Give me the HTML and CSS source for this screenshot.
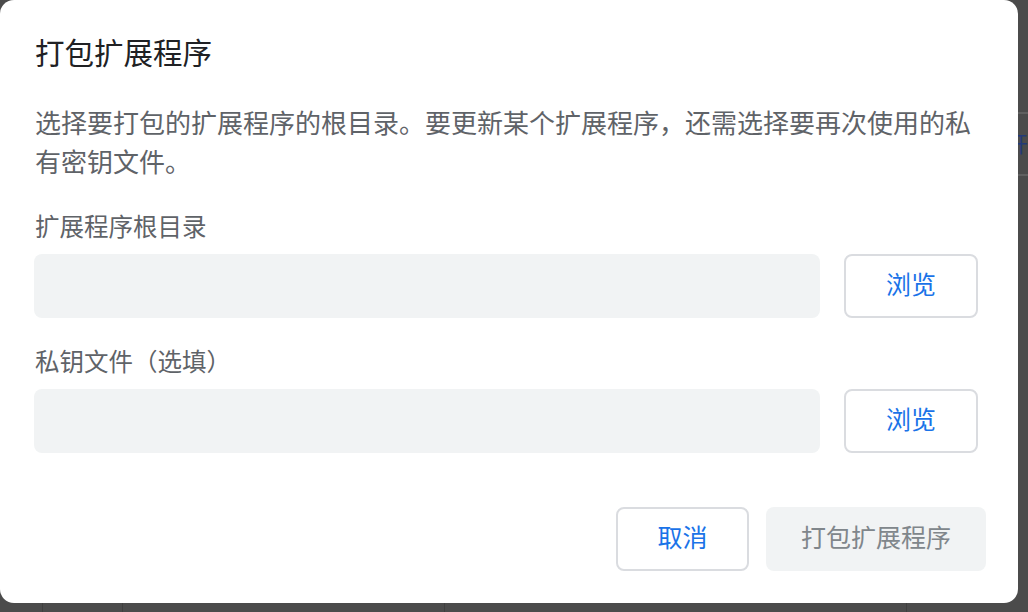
FILE: index.html
```html
<!DOCTYPE html>
<html lang="zh-CN">
<head>
<meta charset="utf-8">
<title>打包扩展程序</title>
<link rel="stylesheet" href="styles.css">
</head>
<body>
<div class="backdrop">
  <div class="bg-line bg-line-a"></div>
  <div class="bg-glyph">开</div>
  <div class="bg-line bg-line-b"></div>
  <div class="bg-col bg-col-1"></div>
  <div class="bg-col bg-col-2"></div>
  <div class="bg-col bg-col-3"></div>
  <div class="bg-col bg-col-4"></div>
</div>
<div class="dialog">
  <h1 class="title">打包扩展程序</h1>
  <p class="desc">选择要打包的扩展程序的根目录。要更新某个扩展程序，还需选择要再次使用的私有密钥文件。</p>
  <label class="label">扩展程序根目录</label>
  <div class="row">
    <div class="input"></div>
    <button class="btn btn-outline btn-browse">浏览</button>
  </div>
  <label class="label label-2">私钥文件（选填）</label>
  <div class="row">
    <div class="input"></div>
    <button class="btn btn-outline btn-browse">浏览</button>
  </div>
  <div class="footer">
    <button class="btn btn-outline btn-cancel">取消</button>
    <button class="btn btn-disabled btn-pack">打包扩展程序</button>
  </div>
</div>
</body>
</html>
```

FILE: styles.css
```css
html, body {
  margin: 0;
  padding: 0;
}
body {
  width: 1028px;
  height: 612px;
  overflow: hidden;
  background: #4b4b4b;
  font-family: "Noto Sans CJK SC", "Noto Sans", sans-serif;
  position: relative;
}
.backdrop {
  position: absolute;
  inset: 0;
  z-index: 0;
}
.bg-line {
  position: absolute;
  left: 1000px;
  width: 28px;
  height: 2px;
  background: #606060;
}
.bg-line-a { top: 112px; }
.bg-line-b { top: 174px; }
.bg-glyph {
  position: absolute;
  left: 1006px;
  top: 128px;
  font-size: 22px;
  line-height: 28px;
  color: #233a78;
}
.bg-col {
  position: absolute;
  top: 600px;
  width: 1px;
  height: 12px;
  background: #3f3f3f;
}
.bg-col-1 { left: 42px; }
.bg-col-2 { left: 122px; }
.bg-col-3 { left: 444px; }
.bg-col-4 { left: 906px; }

.dialog {
  position: relative;
  z-index: 1;
  width: 1018px;
  height: 603px;
  box-sizing: border-box;
  padding: 31px 32px 32px 35px;
  background: #ffffff;
  border-radius: 14px;
  display: flex;
  flex-direction: column;
}
.title {
  margin: 0;
  font-size: 29.5px;
  line-height: 40px;
  font-weight: 400;
  color: #202124;
}
.desc {
  margin: 31px 0 0;
  font-size: 26px;
  line-height: 39px;
  color: #5f6368;
}
.label {
  display: block;
  margin-top: 30px;
  font-size: 24.5px;
  line-height: 32px;
  color: #5f6368;
}
.label-2 {
  margin-top: 27px;
}
.row {
  display: flex;
  gap: 24px;
  margin-top: 12px;
  margin-right: 8px;
  margin-left: -1px;
}
.input {
  flex: 1;
  height: 64px;
  background: #f1f3f4;
  border-radius: 8px;
}
.btn {
  font-family: inherit;
  font-size: 25px;
  height: 64px;
  border-radius: 8px;
  box-sizing: border-box;
  padding: 0 0 6px;
  cursor: pointer;
}
.btn-outline {
  background: #ffffff;
  border: 2px solid #dadce0;
  color: #1a73e8;
}
.btn-browse {
  width: 134px;
}
.footer {
  margin-top: auto;
  display: flex;
  justify-content: flex-end;
  gap: 17px;
}
.btn-cancel {
  width: 133px;
}
.btn-disabled {
  background: #f1f3f4;
  border: none;
  color: #80868b;
}
.btn-pack {
  width: 220px;
}
```
